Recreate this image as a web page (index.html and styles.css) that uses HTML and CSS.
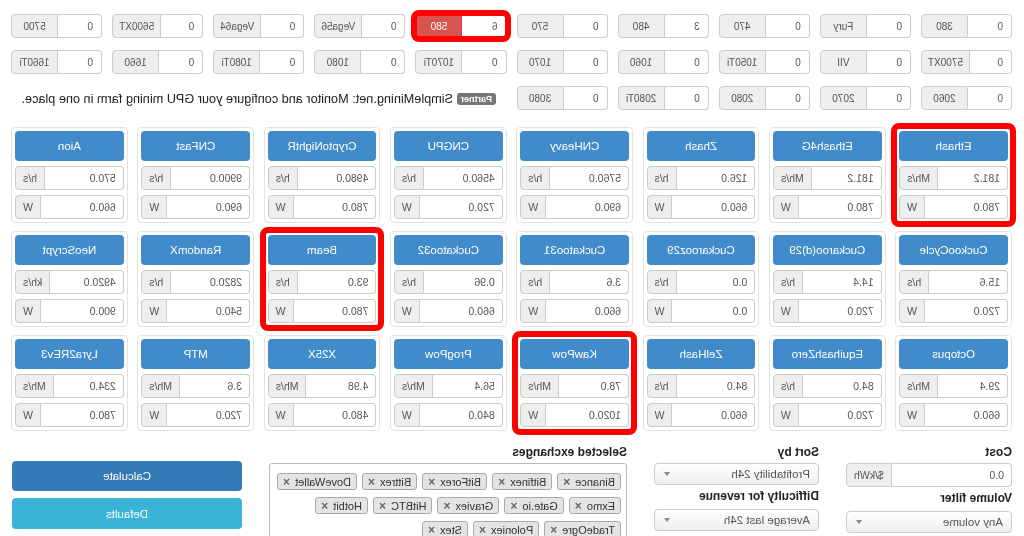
FILE: index.html
```html
<!DOCTYPE html>
<html lang="en">
<head>
    <meta charset="UTF-8">
    <meta name="viewport" content="width=device-width, initial-scale=1.0">
    <title>GPU Mining Calculator</title>
    <link rel="stylesheet" href="styles.css">
</head>
<body>

    <div class="page">

        <!-- GPU counts -->
        <section class="gpus">
            <div class="gpu"><input class="gpu-count" type="text" value="0"><span class="gpu-name">380</span></div>
            <div class="gpu"><input class="gpu-count" type="text" value="0"><span class="gpu-name">Fury</span></div>
            <div class="gpu"><input class="gpu-count" type="text" value="0"><span class="gpu-name">470</span></div>
            <div class="gpu"><input class="gpu-count" type="text" value="3"><span class="gpu-name">480</span></div>
            <div class="gpu"><input class="gpu-count" type="text" value="0"><span class="gpu-name">570</span></div>
            <div class="gpu marked"><input class="gpu-count" type="text" value="6"><span class="gpu-name active">580</span></div>
            <div class="gpu"><input class="gpu-count" type="text" value="0"><span class="gpu-name">Vega56</span></div>
            <div class="gpu"><input class="gpu-count" type="text" value="0"><span class="gpu-name">Vega64</span></div>
            <div class="gpu"><input class="gpu-count" type="text" value="0"><span class="gpu-name">5600XT</span></div>
            <div class="gpu"><input class="gpu-count" type="text" value="0"><span class="gpu-name">5700</span></div>

            <div class="gpu"><input class="gpu-count" type="text" value="0"><span class="gpu-name">5700XT</span></div>
            <div class="gpu"><input class="gpu-count" type="text" value="0"><span class="gpu-name">VII</span></div>
            <div class="gpu"><input class="gpu-count" type="text" value="0"><span class="gpu-name">1050Ti</span></div>
            <div class="gpu"><input class="gpu-count" type="text" value="0"><span class="gpu-name">1060</span></div>
            <div class="gpu"><input class="gpu-count" type="text" value="0"><span class="gpu-name">1070</span></div>
            <div class="gpu"><input class="gpu-count" type="text" value="0"><span class="gpu-name">1070Ti</span></div>
            <div class="gpu"><input class="gpu-count" type="text" value="0"><span class="gpu-name">1080</span></div>
            <div class="gpu"><input class="gpu-count" type="text" value="0"><span class="gpu-name">1080Ti</span></div>
            <div class="gpu"><input class="gpu-count" type="text" value="0"><span class="gpu-name">1660</span></div>
            <div class="gpu"><input class="gpu-count" type="text" value="0"><span class="gpu-name">1660Ti</span></div>

            <div class="gpu"><input class="gpu-count" type="text" value="0"><span class="gpu-name">2060</span></div>
            <div class="gpu"><input class="gpu-count" type="text" value="0"><span class="gpu-name">2070</span></div>
            <div class="gpu"><input class="gpu-count" type="text" value="0"><span class="gpu-name">2080</span></div>
            <div class="gpu"><input class="gpu-count" type="text" value="0"><span class="gpu-name">2080Ti</span></div>
            <div class="gpu"><input class="gpu-count" type="text" value="0"><span class="gpu-name">3080</span></div>

            <p class="partner"><span class="badge">Partner</span> SimpleMining.net: Monitor and configure your GPU mining farm in one place.</p>
        </section>

        <!-- Algorithms -->
        <section class="algos">
            <div class="algo marked">
                <div class="algo-name">Ethash</div>
                <div class="field"><input type="text" value="181.2"><span class="unit">Mh/s</span></div>
                <div class="field"><input type="text" value="780.0"><span class="unit">W</span></div>
            </div>
            <div class="algo">
                <div class="algo-name">Ethash4G</div>
                <div class="field"><input type="text" value="181.2"><span class="unit">Mh/s</span></div>
                <div class="field"><input type="text" value="780.0"><span class="unit">W</span></div>
            </div>
            <div class="algo">
                <div class="algo-name">Zhash</div>
                <div class="field"><input type="text" value="126.0"><span class="unit">h/s</span></div>
                <div class="field"><input type="text" value="660.0"><span class="unit">W</span></div>
            </div>
            <div class="algo">
                <div class="algo-name">CNHeavy</div>
                <div class="field"><input type="text" value="5760.0"><span class="unit">h/s</span></div>
                <div class="field"><input type="text" value="690.0"><span class="unit">W</span></div>
            </div>
            <div class="algo">
                <div class="algo-name">CNGPU</div>
                <div class="field"><input type="text" value="4560.0"><span class="unit">h/s</span></div>
                <div class="field"><input type="text" value="720.0"><span class="unit">W</span></div>
            </div>
            <div class="algo">
                <div class="algo-name">CryptoNightR</div>
                <div class="field"><input type="text" value="4980.0"><span class="unit">h/s</span></div>
                <div class="field"><input type="text" value="780.0"><span class="unit">W</span></div>
            </div>
            <div class="algo">
                <div class="algo-name">CNFast</div>
                <div class="field"><input type="text" value="9900.0"><span class="unit">h/s</span></div>
                <div class="field"><input type="text" value="690.0"><span class="unit">W</span></div>
            </div>
            <div class="algo">
                <div class="algo-name">Aion</div>
                <div class="field"><input type="text" value="570.0"><span class="unit">h/s</span></div>
                <div class="field"><input type="text" value="660.0"><span class="unit">W</span></div>
            </div>

            <div class="algo">
                <div class="algo-name">CuckooCycle</div>
                <div class="field"><input type="text" value="15.6"><span class="unit">h/s</span></div>
                <div class="field"><input type="text" value="720.0"><span class="unit">W</span></div>
            </div>
            <div class="algo">
                <div class="algo-name">Cuckaroo(d)29</div>
                <div class="field"><input type="text" value="14.4"><span class="unit">h/s</span></div>
                <div class="field"><input type="text" value="720.0"><span class="unit">W</span></div>
            </div>
            <div class="algo">
                <div class="algo-name">Cuckarooz29</div>
                <div class="field"><input type="text" value="0.0"><span class="unit">h/s</span></div>
                <div class="field"><input type="text" value="0.0"><span class="unit">W</span></div>
            </div>
            <div class="algo">
                <div class="algo-name">Cuckatoo31</div>
                <div class="field"><input type="text" value="3.6"><span class="unit">h/s</span></div>
                <div class="field"><input type="text" value="660.0"><span class="unit">W</span></div>
            </div>
            <div class="algo">
                <div class="algo-name">Cuckatoo32</div>
                <div class="field"><input type="text" value="0.96"><span class="unit">h/s</span></div>
                <div class="field"><input type="text" value="660.0"><span class="unit">W</span></div>
            </div>
            <div class="algo marked">
                <div class="algo-name">Beam</div>
                <div class="field"><input type="text" value="93.0"><span class="unit">h/s</span></div>
                <div class="field"><input type="text" value="780.0"><span class="unit">W</span></div>
            </div>
            <div class="algo">
                <div class="algo-name">RandomX</div>
                <div class="field"><input type="text" value="2820.0"><span class="unit">h/s</span></div>
                <div class="field"><input type="text" value="540.0"><span class="unit">W</span></div>
            </div>
            <div class="algo">
                <div class="algo-name">NeoScrypt</div>
                <div class="field"><input type="text" value="4920.0"><span class="unit">kh/s</span></div>
                <div class="field"><input type="text" value="900.0"><span class="unit">W</span></div>
            </div>

            <div class="algo">
                <div class="algo-name">Octopus</div>
                <div class="field"><input type="text" value="29.4"><span class="unit">Mh/s</span></div>
                <div class="field"><input type="text" value="660.0"><span class="unit">W</span></div>
            </div>
            <div class="algo">
                <div class="algo-name">EquihashZero</div>
                <div class="field"><input type="text" value="84.0"><span class="unit">h/s</span></div>
                <div class="field"><input type="text" value="720.0"><span class="unit">W</span></div>
            </div>
            <div class="algo">
                <div class="algo-name">ZelHash</div>
                <div class="field"><input type="text" value="84.0"><span class="unit">h/s</span></div>
                <div class="field"><input type="text" value="660.0"><span class="unit">W</span></div>
            </div>
            <div class="algo marked">
                <div class="algo-name">KawPow</div>
                <div class="field"><input type="text" value="78.0"><span class="unit">Mh/s</span></div>
                <div class="field"><input type="text" value="1020.0"><span class="unit">W</span></div>
            </div>
            <div class="algo">
                <div class="algo-name">ProgPow</div>
                <div class="field"><input type="text" value="56.4"><span class="unit">Mh/s</span></div>
                <div class="field"><input type="text" value="840.0"><span class="unit">W</span></div>
            </div>
            <div class="algo">
                <div class="algo-name">X25X</div>
                <div class="field"><input type="text" value="4.98"><span class="unit">Mh/s</span></div>
                <div class="field"><input type="text" value="480.0"><span class="unit">W</span></div>
            </div>
            <div class="algo">
                <div class="algo-name">MTP</div>
                <div class="field"><input type="text" value="3.6"><span class="unit">Mh/s</span></div>
                <div class="field"><input type="text" value="720.0"><span class="unit">W</span></div>
            </div>
            <div class="algo">
                <div class="algo-name">Lyra2REv3</div>
                <div class="field"><input type="text" value="234.0"><span class="unit">Mh/s</span></div>
                <div class="field"><input type="text" value="780.0"><span class="unit">W</span></div>
            </div>
        </section>

        <!-- Options -->
        <section class="options">
            <div class="option-col">
                <label class="option-label">Cost</label>
                <div class="field"><input type="text" value="0.0"><span class="unit">$/kWh</span></div>
                <label class="option-label">Volume filter</label>
                <div class="select-wrap">
                    <select><option>Any volume</option></select>
                </div>
            </div>

            <div class="option-col">
                <label class="option-label">Sort by</label>
                <div class="select-wrap">
                    <select><option>Profitability 24h</option></select>
                </div>
                <label class="option-label">Difficulty for revenue</label>
                <div class="select-wrap">
                    <select><option>Average last 24h</option></select>
                </div>
            </div>

            <div class="option-col">
                <label class="option-label">Selected exchanges</label>
                <div class="exchanges">
                    <div class="tag-row">
                        <span class="tag">Binance <b>&times;</b></span>
                        <span class="tag">Bitfinex <b>&times;</b></span>
                        <span class="tag">BitForex <b>&times;</b></span>
                        <span class="tag">Bittrex <b>&times;</b></span>
                        <span class="tag">DoveWallet <b>&times;</b></span>
                    </div>
                    <div class="tag-row">
                        <span class="tag">Exmo <b>&times;</b></span>
                        <span class="tag">Gate.io <b>&times;</b></span>
                        <span class="tag">Graviex <b>&times;</b></span>
                        <span class="tag">HitBTC <b>&times;</b></span>
                        <span class="tag">Hotbit <b>&times;</b></span>
                    </div>
                    <div class="tag-row">
                        <span class="tag">TradeOgre <b>&times;</b></span>
                        <span class="tag">Poloniex <b>&times;</b></span>
                        <span class="tag">Stex <b>&times;</b></span>
                    </div>
                </div>
            </div>

            <div class="option-col buttons">
                <button class="btn btn-calc">Calculate</button>
                <button class="btn btn-defaults">Defaults</button>
            </div>
        </section>

    </div>

</body>
</html>
```

FILE: styles.css
```css
/* General Reset */
* {
    margin: 0;
    padding: 0;
    box-sizing: border-box;
}

html, body {
    overflow: hidden;
}

body {
    font-family: "Liberation Sans", Arial, sans-serif;
    background-color: #fff;
    color: #333;
}

/* the whole screen is shown mirrored */
.page {
    width: 1024px;
    height: 536px;
    overflow: hidden;
    padding: 14px 11px 0 12px;
    transform: scaleX(-1);
}

input, select, button {
    font-family: "Liberation Sans", Arial, sans-serif;
}

/* GPU counts */
.gpus {
    display: grid;
    grid-template-columns: repeat(10, minmax(0, 1fr));
    gap: 12px 10px;
}

.gpu {
    display: flex;
    height: 24px;
    border-radius: 4px;
}

.gpu-count {
    flex: 1 1 0;
    width: 0;
    min-width: 0;
    border: 1px solid #ccc;
    border-right: none;
    border-radius: 4px 0 0 4px;
    padding: 0 8px;
    font-size: 10px;
    color: #555;
}

.gpu-name {
    min-width: 47px;
    padding: 0 6px;
    display: flex;
    align-items: center;
    justify-content: center;
    background-color: #eee;
    border: 1px solid #ccc;
    border-radius: 0 4px 4px 0;
    font-size: 10px;
    color: #555;
}

.gpu-name.active {
    background-color: #d9534f;
    border-color: #d43f3a;
    color: #fff;
}

.partner {
    grid-column: 6 / span 5;
    align-self: center;
    margin-top: 2px;
    text-align: center;
    font-size: 12.7px;
    color: #222;
    white-space: nowrap;
}

.badge {
    display: inline-block;
    background-color: #777;
    color: #fff;
    font-size: 9px;
    font-weight: bold;
    padding: 1px 4px;
    border-radius: 3px;
    vertical-align: 1px;
}

/* Algorithm cards */
.algos {
    display: grid;
    grid-template-columns: repeat(8, minmax(0, 1fr));
    gap: 8px 9.5px;
    margin-top: 17px;
}

.algo {
    display: flex;
    flex-direction: column;
    gap: 5px;
    padding: 3px;
    border: 1px solid #e3e3e3;
    border-radius: 4px;
}

.algo-name {
    height: 30px;
    display: flex;
    align-items: center;
    justify-content: center;
    background-color: #428bca;
    color: #fff;
    border-radius: 4px;
    font-size: 11.5px;
}

.field {
    display: flex;
    height: 24px;
}

.field input {
    flex: 1 1 0;
    width: 0;
    min-width: 0;
    border: 1px solid #ccc;
    border-right: none;
    border-radius: 4px 0 0 4px;
    padding: 0 7px;
    font-size: 10.5px;
    color: #555;
}

.unit {
    display: flex;
    align-items: center;
    justify-content: center;
    padding: 0 7px;
    background-color: #eee;
    border: 1px solid #ccc;
    border-radius: 0 4px 4px 0;
    font-size: 10.5px;
    color: #555;
}

/* red annotation frames */
.marked {
    outline: 6px solid #f00;
    outline-offset: -2px;
}

/* Options */
.options {
    display: grid;
    grid-template-columns: 166px 165px 358px 230px;
    column-gap: 27px;
    margin-top: 14px;
}

.option-col {
    display: flex;
    flex-direction: column;
}

.option-label {
    font-size: 12px;
    font-weight: bold;
    line-height: 14px;
    color: #222;
    margin-bottom: 4px;
}

.option-label + .field,
.option-label + .select-wrap {
    margin-bottom: 4px;
}

.select-wrap + .option-label,
.field + .option-label {
    margin-bottom: 6px;
}

.select-wrap {
    position: relative;
}

.select-wrap select {
    width: 100%;
    height: 22px;
    appearance: none;
    -webkit-appearance: none;
    border: 1px solid #ccc;
    border-radius: 4px;
    background: linear-gradient(#fff, #eee);
    padding: 0 8px;
    font-size: 11.5px;
    color: #555;
}

.select-wrap::after {
    content: "";
    position: absolute;
    right: 10px;
    top: 9px;
    border-left: 3px solid transparent;
    border-right: 3px solid transparent;
    border-top: 4px solid #888;
}

.exchanges {
    height: 90px;
    border: 1px solid #bbb;
    border-radius: 3px;
    padding: 9px 5px 0;
    display: flex;
    flex-direction: column;
    gap: 7px;
}

.tag-row {
    display: flex;
    gap: 5px;
}

.tag {
    display: flex;
    align-items: center;
    gap: 5px;
    height: 17px;
    padding: 0 5px;
    background-color: #e4e4e4;
    border: 1px solid #aaa;
    border-radius: 3px;
    font-size: 11px;
    color: #333;
}

.tag b {
    font-size: 12px;
    color: #666;
}

.buttons {
    padding-top: 16px;
    gap: 7px;
}

.btn {
    height: 30px;
    border: none;
    border-radius: 4px;
    color: #fff;
    font-size: 11.5px;
    cursor: pointer;
}

.btn-calc {
    background-color: #337ab7;
}

.btn-defaults {
    height: 31px;
    background-color: #39b3d7;
}
```
